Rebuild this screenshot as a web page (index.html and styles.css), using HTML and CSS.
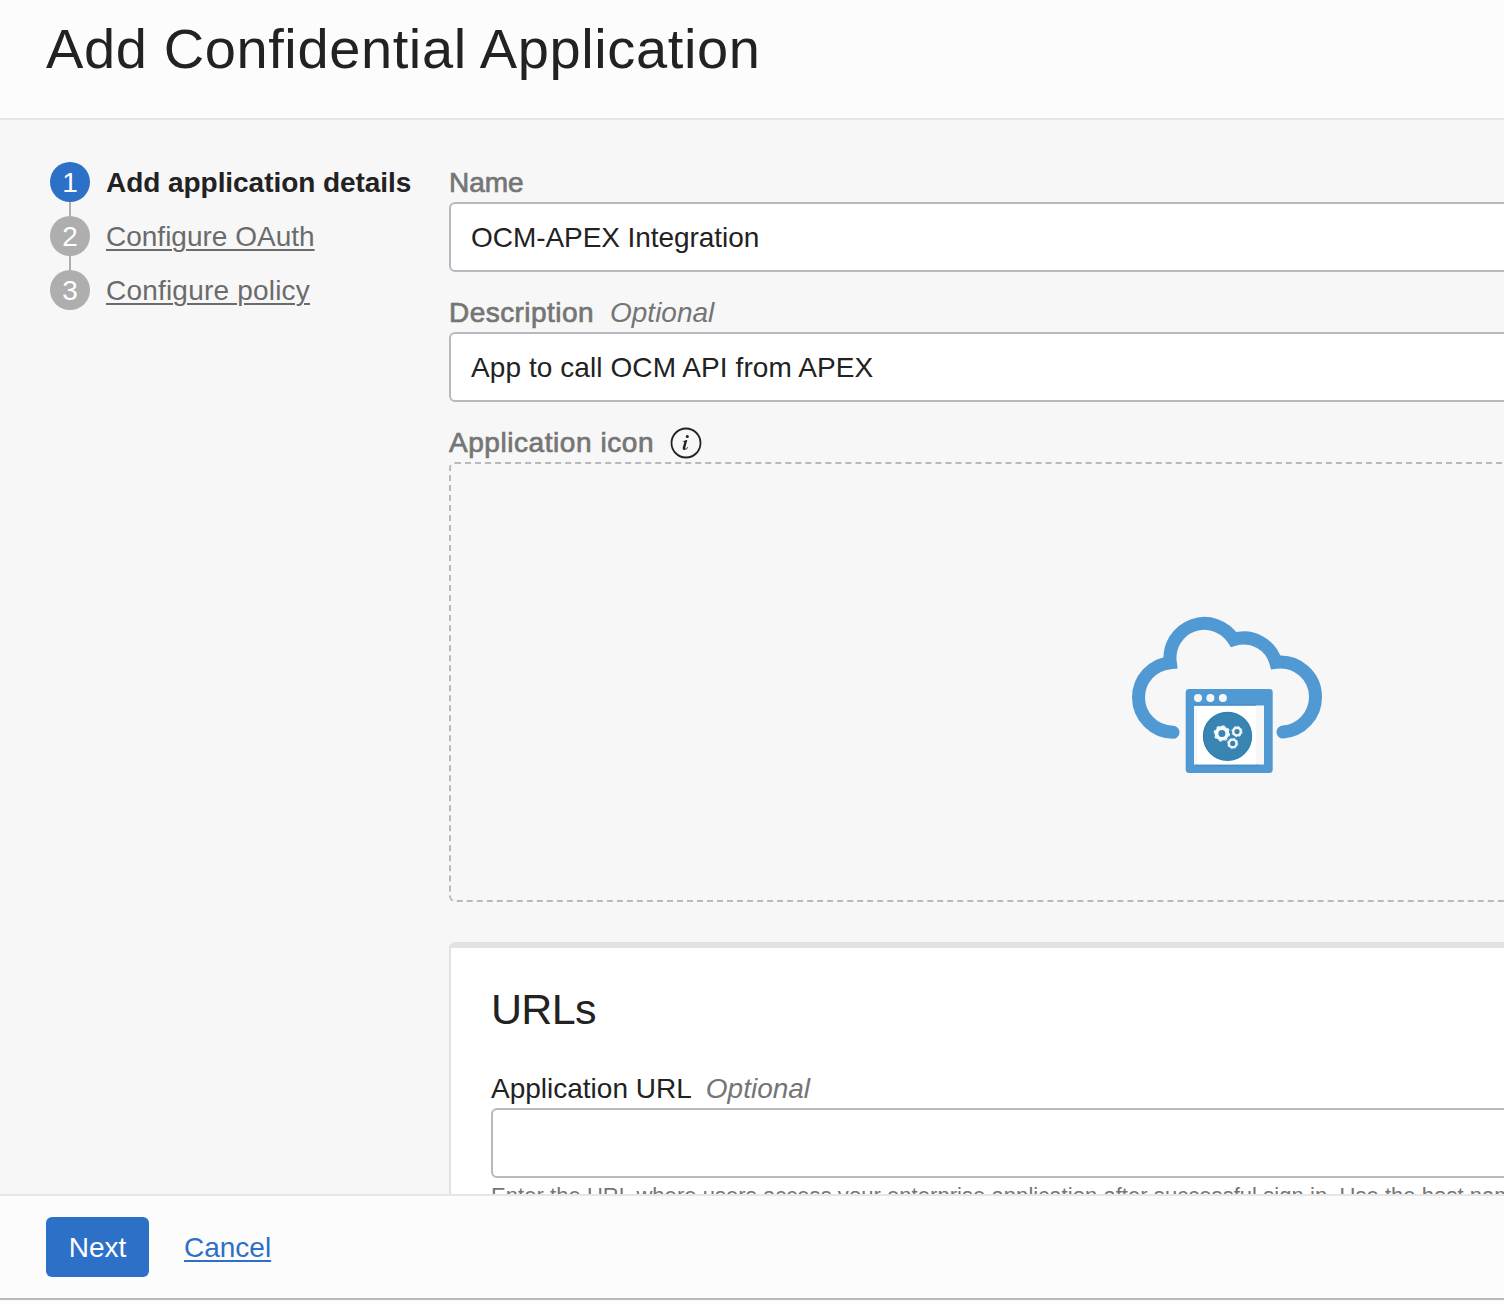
FILE: index.html
```html
<!DOCTYPE html>
<html lang="en">
<head>
<meta charset="utf-8">
<title>Add Confidential Application</title>
<link rel="stylesheet" href="styles.css">
</head>
<body>
<div class="page">
  <header class="header"><h1 class="title">Add Confidential Application</h1></header>
  <main class="main">
    <ol class="steps">
      <li class="step step-active"><span class="badge">1</span><span class="step-label">Add application details</span></li>
      <li class="step"><span class="badge">2</span><a class="step-label" href="#">Configure OAuth</a></li>
      <li class="step"><span class="badge">3</span><a class="step-label step-policy" href="#">Configure policy</a></li>
    </ol>
    <div class="form">
      <div class="field">
        <div class="label"><span class="label-text">Name</span></div>
        <div class="input input-name">OCM-APEX Integration</div>
      </div>
      <div class="field">
        <div class="label"><span class="label-text label-description">Description</span><span class="optional">Optional</span></div>
        <div class="input input-description">App to call OCM API from APEX</div>
      </div>
      <div class="field">
        <div class="label"><span class="label-text label-icon">Application icon</span>
          <svg class="info" viewBox="0 0 32 32" width="32" height="32">
            <circle cx="16" cy="16" r="14.5" fill="none" stroke="#222" stroke-width="1.8"/>
            <circle cx="17.3" cy="9.6" r="1.5" fill="#222"/>
            <path d="M12.7 14.1c1.4 0 2.6-.4 3.6-1h1l-2 7.5c-.3 1.2.2 1.3 1 .8.5-.3.9-.8 1.3-1.3l.5.4c-1 1.4-2.3 2.5-3.8 2.5-1.4 0-1.9-.9-1.5-2.4l1.4-5c.2-.8-.1-1-1.5-1z" fill="#222"/>
          </svg>
        </div>
        <div class="dropzone">
          <svg class="cloud" viewBox="1132 616 190 158" width="190" height="158">
            <path d="M1173 732.3A35 35 0 0 1 1138.5 697.5A35 35 0 0 1 1170.3 662.7A34.5 34.5 0 0 1 1233.7 639.6A33 33 0 0 1 1275.8 662.3A35 35 0 0 1 1315.5 697A35 35 0 0 1 1283 732" fill="none" stroke="#5199d3" stroke-width="13" stroke-linecap="round" stroke-linejoin="miter"/>
            <rect x="1185.7" y="689" width="87" height="84" rx="3.5" fill="#5199d3"/>
            <path d="M1194 705.5h70v59h-70z" fill="#f7f7f7"/>
            <path d="M1197 705.5h59v59h-59z" fill="#fff"/>
            <path d="M1194 705h62M1196 765.5h62" stroke="#478dc8" stroke-width="1.5"/>
            <g fill="#f7f7f7"><circle cx="1198" cy="698" r="4"/><circle cx="1210.4" cy="698" r="4"/><circle cx="1222.9" cy="698" r="4"/></g>
            <circle cx="1227.5" cy="736.3" r="24" fill="#3884b2" stroke="#307fae" stroke-width="1.3"/>
            <g fill="none" stroke="#f4f8fa">
              <circle cx="1221.9" cy="733.4" r="5.4" stroke-width="3.8"/>
              <circle cx="1221.9" cy="733.4" r="7.6" stroke-width="1.2" stroke-dasharray="3 2.97"/>
              <circle cx="1237" cy="731.6" r="3.8" stroke-width="2.4"/>
              <circle cx="1237" cy="731.6" r="5.2" stroke-width=".8" stroke-dasharray="2 2.08"/>
              <circle cx="1232.7" cy="743.4" r="3.8" stroke-width="2.4"/>
              <circle cx="1232.7" cy="743.4" r="5.2" stroke-width=".8" stroke-dasharray="2 2.08"/>
            </g>
          </svg>
        </div>
      </div>
      <section class="panel">
        <h2 class="panel-title">URLs</h2>
        <div class="label"><span class="url-label">Application URL</span><span class="optional optional-url">Optional</span></div>
        <div class="input"></div>
        <p class="hint">Enter the URL where users access your enterprise application after successful sign in. Use the host name</p>
      </section>
    </div>
  </main>
  <footer class="footer"><button class="next">Next</button><a class="cancel" href="#">Cancel</a></footer>
</div>
</body>
</html>
```
FILE: styles.css
```css
* { box-sizing: border-box; }
body { margin: 0; overflow: hidden; background: #fcfcfc; color: #222; font: 28px/42px "Liberation Sans", Arial, sans-serif; }
.page { height: 1300px; display: flex; flex-direction: column; border-bottom: 2px solid #b6bac0; }
.header { flex: none; height: 120px; padding: 16px 46px 0; border-bottom: 2px solid #e6e6e6; }
.title { margin: 0; font-size: 56px; line-height: 66px; font-weight: 400; letter-spacing: .61px; }
.main { flex: 1; min-height: 0; overflow: hidden; display: flex; background: #f7f7f7; padding: 42px 0 0 50px; }
.steps { flex: none; width: 399px; margin: 0; padding: 0; list-style: none; }
.step { display: flex; gap: 16px; height: 54px; color: #6b6b6b; }
.step:not(:last-child) { background: linear-gradient(#aeaeae, #aeaeae) 19px 0 / 2px 54px no-repeat; }
.badge { width: 40px; height: 40px; border-radius: 50%; background: #aeaeae; color: #fff; text-align: center; }
.step-active .badge { background: #2d70c8; }
.step-active .step-label { color: #222; font-weight: 700; letter-spacing: -.05px; }
.step-label { color: inherit; text-decoration: underline; text-decoration-thickness: 2px; text-underline-offset: 3px; white-space: nowrap; }
span.step-label { text-decoration: none; }
.step-policy { letter-spacing: .2px; }
.form { flex: none; width: 1556px; }
.field { margin-bottom: 20px; }
.label { display: flex; height: 40px; padding-top: 2px; align-items: center; white-space: pre; color: #757575; }
.label-text { -webkit-text-stroke: .7px #757575; }
.label-description { letter-spacing: .45px; }
.label-icon { letter-spacing: .56px; }
.optional { margin-left: 16px; font-style: italic; color: #757575; }
.optional-url { margin-left: 14px; }
.info { margin-left: 16px; }
.input { height: 70px; padding: 13px 20px; border: 2px solid #b6bac0; border-radius: 6px; background: #fff; }
.input-name { letter-spacing: -.06px; }
.input-description { letter-spacing: .08px; }
.dropzone { height: 440px; display: flex; align-items: center; justify-content: center; padding-top: 26px; border: 2px dashed #b6bac0; border-radius: 6px; }
.cloud { overflow: visible; }
.panel { margin-top: 40px; height: 500px; padding: 34px 40px; background: #fff; border: 2px solid #e1e2e6; border-top-width: 6px; border-radius: 6px; }
.panel-title { margin: 0 0 32px; font-size: 43px; line-height: 54px; font-weight: 400; letter-spacing: -.7px; }
.url-label { color: #222; }
.hint { margin: 4px 0 0; font-size: 22px; line-height: 28px; letter-spacing: .05px; color: #757575; white-space: nowrap; }
.footer { flex: none; height: 104px; display: flex; align-items: center; gap: 35px; padding: 0 46px; border-top: 2px solid #e6e6e6; }
.next { width: 103px; height: 60px; padding: 2px 0 0; border: 0; border-radius: 6px; background: #2d70c8; color: #fff; font: inherit; }
.cancel { padding-top: 2px; color: #2d70c8; text-decoration-thickness: 2px; text-underline-offset: 3px; }
```
